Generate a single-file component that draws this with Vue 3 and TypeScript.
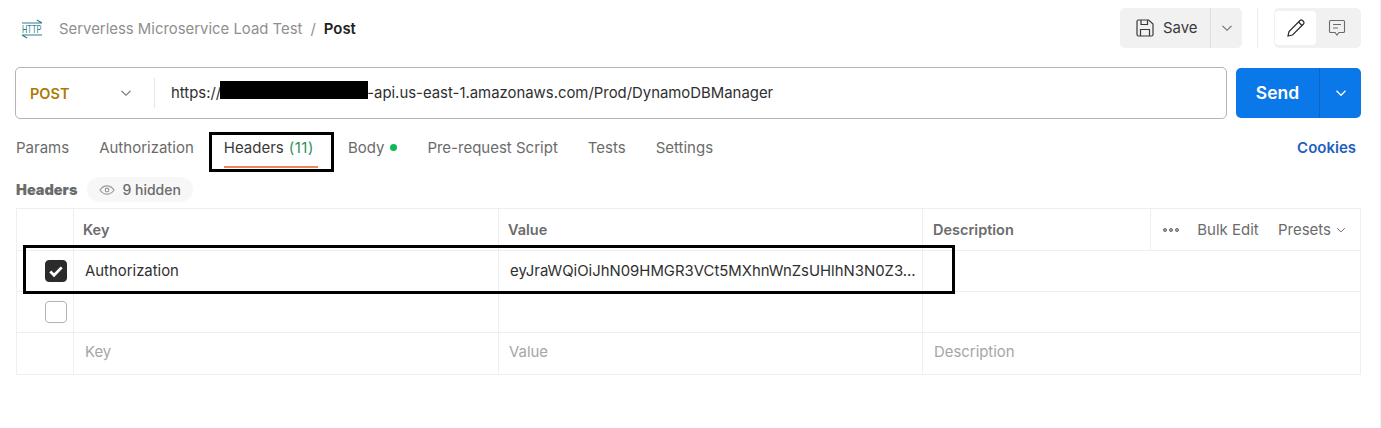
<script setup lang="ts">
const tabs = [
  { name: 'Params' },
  { name: 'Authorization' },
  { name: 'Headers', count: '(11)', active: true },
  { name: 'Body', dot: true },
  { name: 'Pre-request Script' },
  { name: 'Tests' },
  { name: 'Settings' }
]
</script>

<template>
  <main class="page">
    <header class="top">
      <div class="crumbs">
        <svg class="http" viewBox="0 0 22 20" aria-hidden="true">
          <path d="M1 4h20M16 1l5 3" fill="none" stroke="#2b7d8e" stroke-width="1.100" />
          <text class="http-text" transform="translate(1 14) scale(0.93 1.35)">HTTP</text>
          <path d="M1 16h20M1 16l5 3" fill="none" stroke="#2b7d8e" stroke-width="1.100" />
        </svg>
        <span class="collection">Serverless Microservice Load Test</span>
        <span class="slash">/</span>
        <span class="req">Post</span>
      </div>
      <div class="top-actions">
        <div class="save">
          <div class="save-main">
            <svg width="20" height="20" viewBox="0 0 20 20" fill="none" stroke="#3a3a3a" stroke-width="1.200" aria-hidden="true">
              <path d="M3.500 2h10.200L18 6v10.500a1.500 1.500 0 0 1-1.500 1.500h-13A1.500 1.500 0 0 1 2 16.500v-13A1.500 1.500 0 0 1 3.500 2Z" />
              <path d="M6 2v4.500h6.500V2M5.500 18v-6.500h9V18" />
            </svg>
            <span>Save</span>
          </div>
          <div class="save-caret">
            <svg width="12" height="12" viewBox="0 0 12 12" fill="none" stroke="#6b6b6b" stroke-width="1.100" aria-hidden="true"><path d="M1.500 3.800 6 8.300l4.500-4.500" /></svg>
          </div>
        </div>
        <div class="vline"></div>
        <div class="modes">
          <div class="mode on">
            <svg width="20" height="20" viewBox="0 0 20 20" fill="none" stroke="#2b2b2b" stroke-width="1.200" aria-hidden="true">
              <path d="M2 18l1-4.500L14 2.500a1.800 1.800 0 0 1 2.500 0l1 1a1.800 1.800 0 0 1 0 2.500L6.500 17Z" />
              <path d="M12.500 4l3.500 3.500" />
            </svg>
          </div>
          <div class="mode note">
            <svg width="18" height="18" viewBox="0 0 18 18" fill="none" stroke="#6b6b6b" stroke-width="1.100" aria-hidden="true">
              <path d="M2.500 1.500h13a1 1 0 0 1 1 1v10a1 1 0 0 1-1 1H11l-2 2.500L7 13.500H2.500a1 1 0 0 1-1-1v-10a1 1 0 0 1 1-1Z" />
              <path d="M5 5.500h8M5 9h5" />
            </svg>
          </div>
        </div>
      </div>
    </header>

    <section class="url-row">
      <div class="url-box">
        <div class="method">
          <span>POST</span>
          <svg width="12" height="12" viewBox="0 0 12 12" fill="none" stroke="#6b6b6b" stroke-width="1.100" aria-hidden="true"><path d="M1.500 3.800 6 8.300l4.500-4.500" /></svg>
        </div>
        <div class="url">https://xxxxxxxxxxxxxxxxxx-api.us-east-1.amazonaws.com/Prod/DynamoDBManager</div>
        <div class="redact"></div>
      </div>
      <div class="send">
        <span class="send-main">Send</span>
        <span class="send-caret">
          <svg width="12" height="12" viewBox="0 0 12 12" fill="none" stroke="#fff" stroke-width="1.300" aria-hidden="true"><path d="M1.500 3.800 6 8.300l4.500-4.500" /></svg>
        </span>
      </div>
    </section>

    <nav class="tabs">
      <div v-for="t in tabs" :key="t.name" class="tab" :class="{ active: t.active }">
        {{ t.name }}
        <span v-if="t.count" class="count">{{ t.count }}</span>
        <span v-if="t.dot" class="dot"></span>
      </div>
      <div class="cookies">Cookies</div>
      <div class="mark-tab"></div>
    </nav>

    <div class="sub">
      <strong>Headers</strong>
      <span class="pill">
        <svg width="16" height="16" viewBox="0 0 16 16" fill="none" stroke="#9a9a9a" stroke-width="1.200" aria-hidden="true">
          <path d="M1 8c2-3 4.300-4.200 7-4.200S13 5 15 8c-2 3-4.300 4.200-7 4.200S3 11 1 8Z" />
          <circle cx="8" cy="8" r="1.800" />
        </svg>
        9 hidden
      </span>
    </div>

    <section class="table">
      <div class="row head">
        <div class="cell check"></div>
        <div class="cell key">Key</div>
        <div class="cell val">Value</div>
        <div class="cell desc">Description</div>
        <div class="cell tools">
          <span class="dots"><i></i><i></i><i></i></span>
          <span class="bulk">Bulk Edit</span>
          <span class="presets">Presets
            <svg width="10" height="10" viewBox="0 0 12 12" fill="none" stroke="#6b6b6b" stroke-width="1.200" aria-hidden="true"><path d="M1.500 3.800 6 8.300l4.500-4.500" /></svg>
          </span>
        </div>
      </div>
      <div class="row">
        <div class="cell check">
          <span class="box on">
            <svg width="16" height="16" viewBox="0 0 14 14" fill="none" stroke="#fff" stroke-width="2.400" aria-hidden="true"><path d="M2 7.500l3.300 3.200L12 3.800" /></svg>
          </span>
        </div>
        <div class="cell key text">Authorization</div>
        <div class="cell val text">eyJraWQiOiJhN09HMGR3VCt5MXhnWnZsUHlhN3N0Z3...</div>
        <div class="cell desc wide"></div>
      </div>
      <div class="row">
        <div class="cell check"><span class="box"></span></div>
        <div class="cell key"></div>
        <div class="cell val"></div>
        <div class="cell desc wide"></div>
      </div>
      <div class="row last">
        <div class="cell check"></div>
        <div class="cell key ph">Key</div>
        <div class="cell val ph">Value</div>
        <div class="cell desc wide ph">Description</div>
      </div>
      <div class="mark-row"></div>
    </section>
  </main>
</template>

<style>
html, body {
  margin: 0;
  background: #fff;
}
</style>

<style scoped>
* { box-sizing: border-box; }

.page {
  width: 1381px;
  height: 428px;
  overflow: hidden;
  padding: 8px 19px 0 15px;
  border-right: 1px solid #f0f0f0;
  font-family: Inter, "Liberation Sans", sans-serif;
  font-size: 14.900px;
  color: #212121;
  background: #fff;
}

.top {
  display: flex;
  justify-content: space-between;
  align-items: center;
  height: 40px;
}
.crumbs {
  display: flex;
  align-items: center;
  padding: 1px 0 0 6px;
}
.http { width: 22px; height: 20px; margin-right: 16px; overflow: visible; }
.http-text { font-family: "Liberation Sans", sans-serif; font-size: 8px; fill: #2b7d8e; }
.collection { color: #8f8f8f; }
.slash { color: #8f8f8f; margin: 0 8px; }
.req { font-weight: 600; }

.top-actions { display: flex; align-items: center; }
.save {
  display: flex;
  width: 122px;
  height: 40px;
  background: #f1f1f1;
  border-radius: 5px;
}
.save-main {
  display: flex;
  align-items: center;
  gap: 8px;
  width: 91px;
  padding-left: 15px;
  color: #3a3a3a;
  border-right: 1px solid #dedede;
}
.save-caret { flex: 1; display: grid; place-items: center; }
.vline { width: 1px; height: 40px; background: #ececec; margin: 0 16px 0 15px; }
.modes {
  display: flex;
  align-items: center;
  width: 87px;
  height: 40px;
  padding: 3px 0 3px 1px;
  background: #f1f1f1;
  border-radius: 5px;
}
.mode { flex: 1; height: 34px; display: grid; place-items: center; border-radius: 4px; }
.mode.on { flex: 0 0 41px; background: #fff; }
.mode.note { padding-right: 3px; }

.url-row {
  display: flex;
  align-items: center;
  gap: 9px;
  margin-top: 19px;
}
.url-box {
  position: relative;
  flex: 1;
  display: flex;
  align-items: center;
  height: 52px;
  border: 1px solid #b3b3b3;
  border-radius: 5px;
}
.method {
  display: flex;
  align-items: center;
  justify-content: space-between;
  width: 139px;
  height: 30px;
  padding: 0 22px 0 14px;
  border-right: 1px solid #e6e6e6;
  color: #ad7a03;
  font-size: 14.500px;
  font-weight: 600;
}
.url { padding-left: 16px; color: #303030; }
.redact {
  position: absolute;
  left: 204px;
  top: 13px;
  width: 148px;
  height: 18px;
  background: #000;
}
.send {
  display: flex;
  width: 125px;
  height: 50px;
  border-radius: 5px;
  background: #0a78e8;
  color: #fff;
}
.send-main {
  width: 84px;
  display: grid;
  place-items: center;
  padding-bottom: 2px;
  font-size: 17.500px;
  font-weight: 600;
  border-right: 1px solid #0a66c4;
}
.send-caret { flex: 1; display: grid; place-items: center; }

.tabs {
  position: relative;
  display: flex;
  align-items: center;
  gap: 30px;
  height: 40px;
  margin-top: 8px;
  padding-left: 1px;
  font-size: 15px;
  color: #6b6b6b;
}
.tab { position: relative; display: flex; align-items: center; gap: 5px; white-space: nowrap; }
.tab.active { color: #3a3a3a; padding-right: 4px; }
.tab.active::after {
  content: '';
  position: absolute;
  left: 0;
  right: 0;
  bottom: -11px;
  height: 2px;
  background: #f0845f;
}
.count { color: #2f8f5b; letter-spacing: 0.5px; }
.dot { width: 7px; height: 7px; border-radius: 50%; background: #0cbb52; margin-left: 1px; }
.cookies { margin-left: auto; margin-right: 5px; color: #1f5fbf; font-weight: 600; }
.mark-tab {
  position: absolute;
  left: 194px;
  top: 5px;
  width: 125px;
  height: 40px;
  border: 3px solid #000;
}

.sub {
  display: flex;
  align-items: center;
  gap: 10px;
  height: 25px;
  margin-top: 10px;
  padding-left: 1px;
  color: #6b6b6b;
  font-size: 14.500px;
  font-weight: 600;
}
.pill {
  display: inline-flex;
  align-items: center;
  gap: 7px;
  height: 25px;
  padding: 0 12px;
  border-radius: 13px;
  background: #f7f7f7;
  font-size: 14px;
  font-weight: 500;
}

.table {
  position: relative;
  width: 1345px;
  margin: 6px 0 0 1px;
  border: 1px solid #efefef;
}
.row {
  display: grid;
  grid-template-columns: 57px 425px 424px 228px 1fr;
  height: 41px;
  border-bottom: 1px solid #efefef;
}
.row.head { height: 42px; color: #6b6b6b; font-weight: 600; font-size: 14.500px; }
.row.last { border-bottom: 0; }
.cell {
  display: flex;
  align-items: center;
  padding-left: 9px;
  border-right: 1px solid #efefef;
}
.cell.check { justify-content: flex-end; padding: 0 6px 0 0; }
.cell.wide { grid-column: span 2; border-right: 0; }
.cell.desc { padding-left: 10px; }
.text { color: #303030; padding: 0 0 0 11px; }
.ph { color: #a6a6a6; padding: 0 0 3px 11px; }
.cell.val.ph { padding-left: 10px; }
.cell.desc.ph { padding-left: 11px; }
.tools {
  justify-content: space-between;
  padding: 0 14px 0 12px;
  border-right: 0;
  color: #6b6b6b;
  font-weight: 400;
  font-size: 15px;
}
.bulk { margin-right: 1px; }
.dots { display: inline-flex; gap: 2px; }
.dots i { width: 4px; height: 4px; border-radius: 50%; border: 1px solid #6b6b6b; background: #aaa; }
.presets { display: inline-flex; align-items: center; gap: 5px; }
.box {
  width: 22px;
  height: 22px;
  border: 1px solid #b3b3b3;
  border-radius: 4px;
  display: grid;
  place-items: center;
}
.box.on { background: #2b2b2b; border-color: #2b2b2b; }
.mark-row {
  position: absolute;
  left: 6px;
  top: 36px;
  width: 932px;
  height: 49px;
  border: 3px solid #000;
  pointer-events: none;
}
</style>
